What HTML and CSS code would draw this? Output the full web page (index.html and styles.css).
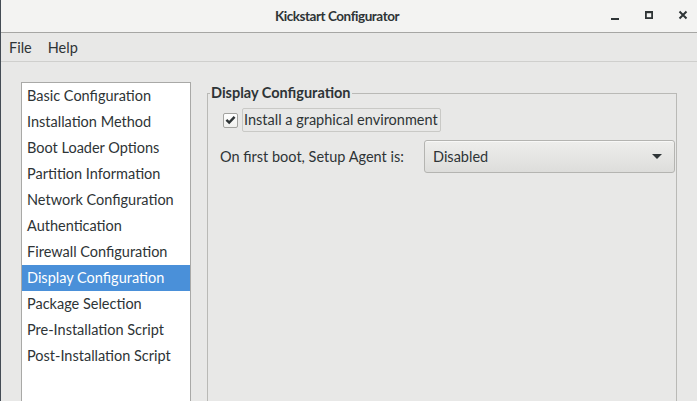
FILE: index.html
```html
<!DOCTYPE html>
<html>
<head>
<meta charset="utf-8">
<link rel="stylesheet" href="styles.css">
</head>
<body>
<div class="window">
  <header class="titlebar">
    <div class="title">Kickstart Configurator</div>
    <div class="controls">
      <svg class="ctl" width="16" height="16" viewBox="0 0 16 16"><rect x="4" y="11" width="8" height="2" fill="#2e3436"/></svg>
      <svg class="ctl" width="16" height="16" viewBox="0 0 16 16"><rect x="4.9" y="4.9" width="6.2" height="6.2" fill="none" stroke="#2e3436" stroke-width="1.8"/><rect x="4" y="4" width="8" height="2.2" fill="#2e3436"/></svg>
      <svg class="ctl" width="16" height="16" viewBox="0 0 16 16"><path d="M4.5 4.5 L11.5 11.5 M11.5 4.5 L4.5 11.5" stroke="#2e3436" stroke-width="2"/></svg>
    </div>
  </header>
  <nav class="menubar">
    <span class="menu">File</span>
    <span class="menu">Help</span>
  </nav>
  <main class="content">
    <ul class="sidebar">
      <li>Basic Configuration</li>
      <li>Installation Method</li>
      <li>Boot Loader Options</li>
      <li>Partition Information</li>
      <li>Network Configuration</li>
      <li>Authentication</li>
      <li>Firewall Configuration</li>
      <li class="selected">Display Configuration</li>
      <li>Package Selection</li>
      <li>Pre-Installation Script</li>
      <li>Post-Installation Script</li>
    </ul>
    <fieldset class="frame">
      <legend class="legend">Display Configuration</legend>
      <div class="row check-row">
        <span class="checkbox">
          <svg width="14" height="14" viewBox="0 0 14 14"><path d="M2.6 6.8 L5.6 9.8 L11.4 3.6" fill="none" stroke="#2e3436" stroke-width="2.6"/></svg>
        </span>
        <span class="check-label">Install a graphical environment</span>
      </div>
      <div class="row combo-row">
        <span class="combo-label">On first boot, Setup Agent is:</span>
        <div class="combo">
          <span>Disabled</span>
          <svg width="10" height="6" viewBox="0 0 10 6"><path d="M0 0 H10 L5 5 Z" fill="#2e3436"/></svg>
        </div>
      </div>
    </fieldset>
  </main>
</div>
</body>
</html>
```
FILE: styles.css
```css
* { box-sizing: border-box; }
html, body { margin: 0; padding: 0; }
body {
  width: 697px;
  height: 401px;
  overflow: hidden;
  background: #e8e8e7;
  font-family: "Lato", "Noto Sans", sans-serif;
  font-size: 14.5px;
  color: #2e3436;
}
.window {
  height: 401px;
  border-left: 1px solid #444c55;
  display: flex;
  flex-direction: column;
  overflow: hidden;
}
.titlebar {
  height: 33px;
  flex: none;
  background: #f3f3f2;
  border-bottom: 1px solid #a6a6a4;
  display: flex;
  align-items: center;
  justify-content: center;
  position: relative;
}
.title {
  font-weight: bold;
  font-size: 13.5px;
  letter-spacing: -0.45px;
  margin-left: -24px;
}
.controls {
  position: absolute;
  right: 6px;
  top: 7px;
  display: flex;
  gap: 18px;
}
.menubar {
  height: 29px;
  flex: none;
  border-bottom: 1px solid #cfcfcd;
  display: flex;
  align-items: center;
  padding-left: 8px;
  gap: 16px;
}
.content {
  flex: 1;
  min-height: 0;
  display: flex;
  padding: 20px 20px 0 20px;
  gap: 16px;
  align-items: flex-start;
  overflow: hidden;
}
.sidebar {
  list-style: none;
  margin: 0;
  padding: 0;
  width: 170px;
  height: 340px;
  background: #fff;
  border: 1px solid #a9a9a7;
  flex: none;
}
.sidebar li {
  height: 26px;
  line-height: 26px;
  padding-left: 5px;
  white-space: nowrap;
}
.sidebar li.selected {
  background: #4a90d9;
  color: #fff;
}
.frame {
  margin: 0;
  width: 470px;
  height: 340px;
  border: 1px solid #b9b9b6;
  padding: 0 1px 0 12px;
  flex: none;
}
.legend {
  font-weight: bold;
  padding: 0 1px;
  margin-left: -10px;
  line-height: 22px;
}
.row {
  display: flex;
  align-items: center;
}
.check-row {
  margin-top: 4px;
  height: 24px;
  padding-left: 3px;
}
.checkbox {
  width: 15px;
  height: 15px;
  border: 1px solid #a3a3a0;
  border-radius: 2px;
  background: linear-gradient(#ffffff, #f0f0ee);
  display: flex;
  align-items: center;
  justify-content: center;
  margin-right: 4px;
}
.check-label {
  border: 1px solid #c9c9c6;
  border-radius: 2px;
  height: 24px;
  line-height: 22px;
  padding: 0 2px 0 1px;
}
.combo-row {
  margin-top: 8px;
}
.combo-label {
  width: 204px;
  flex: none;
}
.combo {
  width: 251px;
  height: 33px;
  border: 1px solid #b4b4b1;
  border-radius: 3px;
  background: linear-gradient(#eeeeec, #dddddb);
  display: flex;
  align-items: center;
  justify-content: space-between;
  padding: 0 12px 0 8px;
  box-shadow: 0 1px 0 rgba(255,255,255,0.6) inset;
}
```
